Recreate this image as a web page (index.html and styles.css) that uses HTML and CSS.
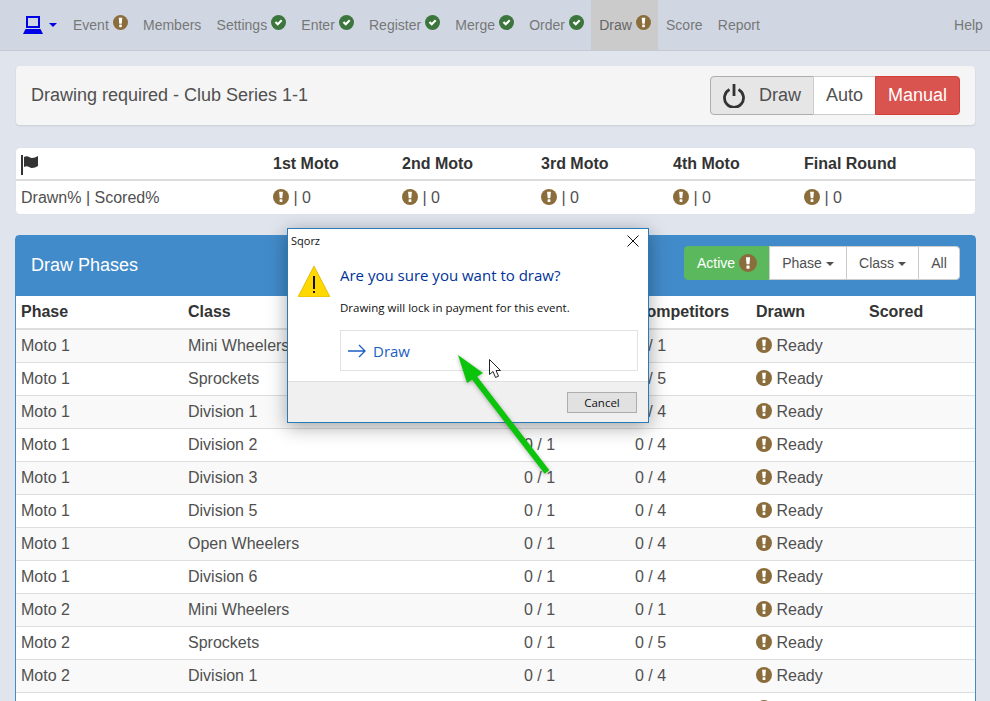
FILE: index.html
```html
<!DOCTYPE html>
<html lang="en">
<head>
    <title>Sqorz - Draw</title>
    <link rel="stylesheet" href="styles.css">
</head>
<body>
    <svg class="sprites">
        <symbol id="warn" viewBox="0 0 16 16">
            <circle cx="8" cy="8" r="8" fill="currentColor"/>
            <path d="M6.100 2.800h3.800l-.6 6.400H6.700z" fill="#fff"/>
            <rect x="6.600" y="10.200" width="2.800" height="2.800" rx=".5" fill="#fff"/>
        </symbol>
        <symbol id="ok" viewBox="0 0 16 16">
            <circle cx="8" cy="8" r="8" fill="currentColor"/>
            <path d="M4 8.200l1.600-1.600 1.600 1.600 3.400-3.400 1.600 1.600-5 5z" fill="#fff"/>
        </symbol>
    </svg>

    <nav class="navbar">
        <a class="brand">
            <svg class="laptop" viewBox="0 0 20 18">
                <path d="M3 0h14v12H3zM5 2v8h10V2z" fill="#0000e6" fill-rule="evenodd"/>
                <path d="M2.500 13h15L20 18H0z" fill="#0000e6"/>
            </svg>
            <span class="caret"></span>
        </a>
        <a class="nav-item">Event <svg class="ico warn"><use href="#warn"/></svg></a>
        <a class="nav-item">Members</a>
        <a class="nav-item">Settings <svg class="ico good"><use href="#ok"/></svg></a>
        <a class="nav-item">Enter <svg class="ico good"><use href="#ok"/></svg></a>
        <a class="nav-item">Register <svg class="ico good"><use href="#ok"/></svg></a>
        <a class="nav-item">Merge <svg class="ico good"><use href="#ok"/></svg></a>
        <a class="nav-item">Order <svg class="ico good"><use href="#ok"/></svg></a>
        <a class="nav-item active">Draw <svg class="ico warn"><use href="#warn"/></svg></a>
        <a class="nav-item">Score</a>
        <a class="nav-item">Report</a>
        <a class="nav-item help">Help</a>
    </nav>

    <main class="content">
        <div class="well">
            <span class="well-title">Drawing required - Club Series 1-1</span>
            <div class="btn-group big">
                <button class="btn pressed">
                    <svg class="power" viewBox="0 0 22 24">
                        <path d="M6.500 5.500a9.500 9.500 0 1 0 9 0" fill="none" stroke="#333" stroke-width="2.800"/>
                        <rect x="9.600" y="0" width="2.800" height="12" fill="#333"/>
                    </svg>
                    Draw
                </button>
                <button class="btn auto">Auto</button>
                <button class="btn danger">Manual</button>
            </div>
        </div>

        <table class="summary">
            <tr>
                <th>
                    <svg class="flag" viewBox="0 0 18 20">
                        <rect x="0" y="0" width="2" height="20" fill="#333"/>
                        <path d="M3 2c4-2 5 1 8 1 2 0 4-1 6-2v10c-2 1-4 2-6 2-3 0-4-3-8-1z" fill="#333"/>
                    </svg>
                </th>
                <th>1st Moto</th>
                <th>2nd Moto</th>
                <th>3rd Moto</th>
                <th>4th Moto</th>
                <th>Final Round</th>
            </tr>
            <tr>
                <td>Drawn% | Scored%</td>
                <td><svg class="ico warn"><use href="#warn"/></svg> | 0</td>
                <td><svg class="ico warn"><use href="#warn"/></svg> | 0</td>
                <td><svg class="ico warn"><use href="#warn"/></svg> | 0</td>
                <td><svg class="ico warn"><use href="#warn"/></svg> | 0</td>
                <td><svg class="ico warn"><use href="#warn"/></svg> | 0</td>
            </tr>
        </table>

        <section class="panel">
            <header class="panel-head">
                <h3>Draw Phases</h3>
                <div class="btn-group small">
                    <button class="btn success">Active <svg class="ico warn big-ico"><use href="#warn"/></svg></button>
                    <button class="btn phase">Phase <span class="caret"></span></button>
                    <button class="btn class">Class <span class="caret"></span></button>
                    <button class="btn all">All</button>
                </div>
            </header>
            <table class="phases">
                <thead>
                    <tr><th>Phase</th><th>Class</th><th></th><th>Competitors</th><th>Drawn</th><th>Scored</th></tr>
                </thead>
                <tbody>
                    <tr><td>Moto 1</td><td>Mini Wheelers</td><td>0 / 1</td><td>0 / 1</td><td><svg class="ico warn"><use href="#warn"/></svg> Ready</td><td></td></tr>
                    <tr><td>Moto 1</td><td>Sprockets</td><td>0 / 1</td><td>0 / 5</td><td><svg class="ico warn"><use href="#warn"/></svg> Ready</td><td></td></tr>
                    <tr><td>Moto 1</td><td>Division 1</td><td>0 / 1</td><td>0 / 4</td><td><svg class="ico warn"><use href="#warn"/></svg> Ready</td><td></td></tr>
                    <tr><td>Moto 1</td><td>Division 2</td><td>0 / 1</td><td>0 / 4</td><td><svg class="ico warn"><use href="#warn"/></svg> Ready</td><td></td></tr>
                    <tr><td>Moto 1</td><td>Division 3</td><td>0 / 1</td><td>0 / 4</td><td><svg class="ico warn"><use href="#warn"/></svg> Ready</td><td></td></tr>
                    <tr><td>Moto 1</td><td>Division 5</td><td>0 / 1</td><td>0 / 4</td><td><svg class="ico warn"><use href="#warn"/></svg> Ready</td><td></td></tr>
                    <tr><td>Moto 1</td><td>Open Wheelers</td><td>0 / 1</td><td>0 / 4</td><td><svg class="ico warn"><use href="#warn"/></svg> Ready</td><td></td></tr>
                    <tr><td>Moto 1</td><td>Division 6</td><td>0 / 1</td><td>0 / 4</td><td><svg class="ico warn"><use href="#warn"/></svg> Ready</td><td></td></tr>
                    <tr><td>Moto 2</td><td>Mini Wheelers</td><td>0 / 1</td><td>0 / 1</td><td><svg class="ico warn"><use href="#warn"/></svg> Ready</td><td></td></tr>
                    <tr><td>Moto 2</td><td>Sprockets</td><td>0 / 1</td><td>0 / 5</td><td><svg class="ico warn"><use href="#warn"/></svg> Ready</td><td></td></tr>
                    <tr><td>Moto 2</td><td>Division 1</td><td>0 / 1</td><td>0 / 4</td><td><svg class="ico warn"><use href="#warn"/></svg> Ready</td><td></td></tr>
                    <tr><td>Moto 2</td><td>Division 2</td><td>0 / 1</td><td>0 / 4</td><td><svg class="ico warn"><use href="#warn"/></svg> Ready</td><td></td></tr>
                </tbody>
            </table>
        </section>
    </main>

    <div class="dialog">
        <div class="dialog-title">
            <span>Sqorz</span>
            <svg class="dialog-close" viewBox="0 0 12 12"><path d="M.5.5l11 11M11.500.5l-11 11" stroke="#111" fill="none"/></svg>
        </div>
        <div class="dialog-body">
            <svg class="dialog-warn" viewBox="0 0 32 32">
                <path d="M16 1L32 32H0z" fill="#ffd800" stroke="#d9b400" stroke-width=".8"/>
                <rect x="15" y="11" width="2" height="13" fill="#111"/>
                <rect x="15" y="26" width="2" height="2" fill="#111"/>
            </svg>
            <div class="dialog-text">
                <div class="dialog-heading">Are you sure you want to draw?</div>
                <p>Drawing will lock in payment for this event.</p>
                <div class="command-link">
                    <svg viewBox="0 0 18 14"><path d="M0 7h17M11 1l6 6-6 6" fill="none" stroke="#1b5fc1" stroke-width="1.300"/></svg>
                    <span>Draw</span>
                </div>
            </div>
        </div>
        <div class="dialog-foot">
            <button class="dialog-btn">Cancel</button>
        </div>
    </div>

    <svg class="overlay" viewBox="0 0 990 701">
        <g class="pointer-arrow">
            <path d="M547 472L473 376" stroke="#0cc40c" stroke-width="6" fill="none"/>
            <path d="M458 355l25 18-16 10z" fill="#0cc40c"/>
        </g>
        <path d="M489.500 359.500v15l3.500-3 2.500 6 3-1.300-2.500-5.700h4.500z" fill="#fff" stroke="#222"/>
    </svg>
</body>
</html>
```

FILE: styles.css
```css
* {
    box-sizing: border-box;
}

html, body {
    height: 701px;
    overflow: hidden;
}

body {
    margin: 0;
    font-family: "Liberation Sans", Arial, sans-serif;
    font-size: 16px;
    color: #505050;
    background-color: #e0e4ed;
}

.sprites {
    display: none;
}

.ico {
    width: 16px;
    height: 16px;
    vertical-align: -2px;
}

.ico.warn {
    color: #8a6d3b;
}

.ico.good {
    color: #3c763d;
}

.caret {
    display: inline-block;
    width: 0;
    height: 0;
    margin-left: 2px;
    vertical-align: middle;
    border-top: 4px solid;
    border-left: 4px solid transparent;
    border-right: 4px solid transparent;
}

/* navbar */
.navbar {
    display: flex;
    height: 51px;
    padding-left: 15px;
    background-color: #d0d7e3;
    border-bottom: 1px solid #c4c9d2;
    font-size: 14px;
    color: #777;
}

.brand {
    display: flex;
    align-items: center;
    width: 50px;
    padding-left: 8px;
    color: #0000e6;
}

.laptop {
    width: 20px;
    height: 18px;
    margin-right: 4px;
}

.nav-item {
    display: flex;
    gap: 4px;
    padding: 17px 7.200px 0 8px;
    line-height: 16px;
    white-space: nowrap;
}

.nav-item .ico {
    width: 15px;
    height: 15px;
    margin-top: -2px;
}

.nav-item.active {
    background-color: #cbcbcb;
    color: #666;
}

.nav-item.help {
    margin-left: auto;
}

.content {
    padding: 15px 15px 0;
}

/* top well */
.well {
    display: flex;
    justify-content: space-between;
    align-items: center;
    height: 59px;
    margin: 0 0 23px 1px;
    padding: 0 15px;
    background-color: #f5f5f5;
    border-radius: 4px;
    box-shadow: 0 1px 2px rgba(0, 0, 0, 0.1);
}

.well-title {
    font-size: 18px;
}

.btn-group {
    display: flex;
}

.btn {
    display: block;
    margin: 0 0 0 -1px;
    padding: 0;
    font-family: inherit;
    color: #505050;
    background-color: #fff;
    border: 1px solid #ccc;
}

.btn:first-child {
    border-radius: 4px 0 0 4px;
    margin-left: 0;
}

.btn:last-child {
    border-radius: 0 4px 4px 0;
}

.btn-group.big .btn {
    height: 39px;
    font-size: 18px;
}

.btn-group.big .btn.pressed {
    display: flex;
    align-items: center;
    gap: 14px;
    width: 104px;
    padding: 0 12px;
    background-color: #e6e6e6;
    border-color: #adadad;
}

.btn-group.big .btn.auto {
    width: 63px;
}

.btn-group.big .btn.danger {
    width: 85px;
    color: #fff;
    background-color: #d9534f;
    border-color: #d43f3a;
}

.power {
    flex: none;
    width: 22px;
    height: 24px;
}

/* summary table */
.summary {
    width: 959px;
    margin: 0 0 21px 1px;
    border-collapse: separate;
    border-spacing: 0;
    table-layout: fixed;
    background-color: #fff;
    border-radius: 4px;
    box-shadow: 0 0 1px #bcd6e6;
}

.summary th, .summary td {
    height: 33px;
    padding: 0 5px;
    text-align: left;
}

.summary th, .phases th {
    color: #333;
}

.summary th {
    border-bottom: 2px solid #ddd;
}

.summary th:nth-child(1) { width: 252px; }
.summary th:nth-child(2) { width: 129px; }
.summary th:nth-child(3) { width: 139px; }
.summary th:nth-child(4) { width: 132px; }
.summary th:nth-child(5) { width: 131px; }

.flag {
    display: block;
    width: 18px;
    height: 20px;
    margin-top: 3px;
}

/* panel */
.panel {
    margin-right: -1px;
    border: 1px solid #428bca;
    border-radius: 4px 4px 0 0;
    background-color: #fff;
}

.panel-head {
    display: flex;
    justify-content: space-between;
    align-items: center;
    height: 60px;
    padding: 0 15px 1px;
    background-color: #428bca;
}

.panel-head h3 {
    margin: 0;
    font-size: 18px;
    font-weight: normal;
    color: #fff;
}

.btn-group.small {
    margin-bottom: 5px;
}

.btn-group.small .btn {
    height: 34px;
    font-size: 14px;
}

.btn-group.small .caret {
    margin-left: 0;
}

.btn-group.small .btn.success {
    width: 86px;
    padding-left: 12px;
    text-align: left;
    color: #fff;
    background-color: #5cb85c;
    border-color: #5cb85c;
}

.btn-group.small .btn.phase {
    width: 78px;
}

.btn-group.small .btn.class {
    width: 73px;
}

.btn-group.small .btn.all {
    width: 42px;
}

.big-ico {
    width: 18px;
    height: 18px;
    vertical-align: -4px;
}

.phases {
    width: 100%;
    border-collapse: collapse;
    table-layout: fixed;
}

.phases th, .phases td {
    height: 33px;
    padding: 0 5px;
    text-align: left;
    border-top: 1px solid #ddd;
}

.phases th {
    border-top: 0;
    border-bottom: 2px solid #ddd;
}

.phases tbody tr:nth-child(odd) {
    background-color: #f9f9f9;
}

.phases th:nth-child(1) { width: 167px; }
.phases th:nth-child(2) { width: 336px; }
.phases th:nth-child(3) { width: 111px; }
.phases th:nth-child(4) { width: 121px; }
.phases th:nth-child(5) { width: 113px; }

/* windows dialog */
.dialog {
    position: absolute;
    left: 287px;
    top: 228px;
    display: flex;
    flex-direction: column;
    width: 362px;
    height: 195px;
    font-family: "Open Sans", "Noto Sans", sans-serif;
    background-color: #fff;
    border: 1px solid #2a7ab8;
    box-shadow: 0 4px 18px rgba(0, 0, 0, 0.35);
}

.dialog-title {
    display: flex;
    justify-content: space-between;
    align-items: center;
    height: 23px;
    padding: 0 9px 0 3px;
    font-size: 11px;
    color: #111;
}

.dialog-close {
    width: 12px;
    height: 12px;
}

.dialog-body {
    display: flex;
    flex: 1;
    padding: 13px 10px 0 10px;
}

.dialog-warn {
    flex: none;
    width: 32px;
    height: 32px;
    margin-right: 10px;
}

.dialog-text {
    flex: 1;
    margin-top: -1px;
}

.dialog-heading {
    font-size: 15px;
    line-height: 22px;
    color: #003399;
}

.dialog-text p {
    margin: 14px 0 14px;
    font-size: 11.500px;
    line-height: 16px;
    color: #111;
}

.command-link {
    display: flex;
    align-items: center;
    gap: 7px;
    height: 41px;
    padding-left: 7px;
    font-size: 15px;
    color: #1b5fc1;
    border: 1px solid #e2e2e2;
}

.command-link svg {
    width: 18px;
    height: 14px;
}

.dialog-foot {
    display: flex;
    justify-content: flex-end;
    align-items: center;
    height: 41px;
    padding-right: 11px;
    background-color: #f0f0f0;
    border-top: 1px solid #dfdfdf;
}

.dialog-btn {
    width: 70px;
    height: 21px;
    padding: 0;
    font-family: inherit;
    font-size: 11.500px;
    color: #111;
    background-color: #e1e1e1;
    border: 1px solid #adadad;
}

/* arrow and mouse pointer on top of everything */
.overlay {
    position: absolute;
    left: 0;
    top: 0;
    width: 990px;
    height: 701px;
    pointer-events: none;
}

.pointer-arrow {
    filter: drop-shadow(0 1px 2px rgba(0, 0, 0, 0.3));
}
```
